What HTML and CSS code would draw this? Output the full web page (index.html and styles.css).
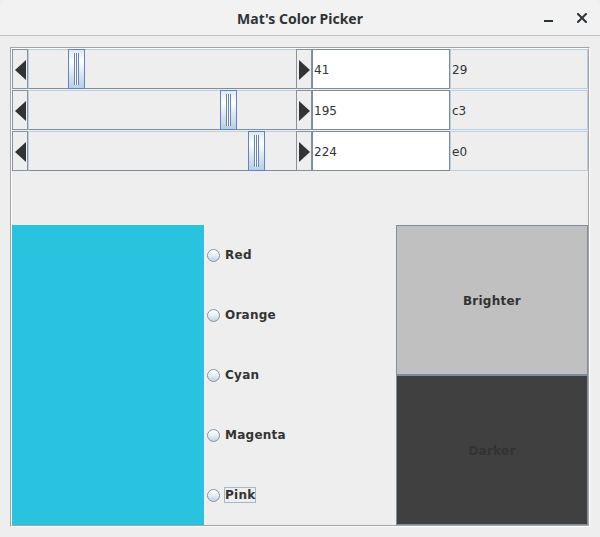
FILE: index.html
```html
<!DOCTYPE html>
<html>
<head>
<meta charset="utf-8">
<title>Mat's Color Picker</title>
<link rel="stylesheet" href="styles.css">
</head>
<body>
<div class="window">
  <div class="titlebar">
    <span class="spacer"></span>
    <span class="title">Mat's Color Picker</span>
    <div class="controls">
      <span class="min"></span>
      <svg class="close" width="10" height="10" viewBox="0 0 10 10"><path d="M1 1 L9 9 M9 1 L1 9" stroke="#2e3436" stroke-width="2" stroke-linecap="square"/></svg>
    </div>
  </div>
  <div class="content">
    <div class="etch-outer">
      <div class="etch-inner">
        <div class="rows">
          <div class="row">
            <div class="scrollbar">
              <div class="arrow"><svg width="11" height="20" viewBox="0 0 11 20"><path d="M0 10 L11 0 L11 20 Z" fill="#333"/></svg></div>
              <div class="track"><div class="thumb" style="left:39px"></div></div>
              <div class="arrow"><svg width="11" height="20" viewBox="0 0 11 20"><path d="M11 10 L0 0 L0 20 Z" fill="#333"/></svg></div>
            </div>
            <div class="field">41</div>
            <div class="hex">29</div>
          </div>
          <div class="row">
            <div class="scrollbar">
              <div class="arrow"><svg width="11" height="20" viewBox="0 0 11 20"><path d="M0 10 L11 0 L11 20 Z" fill="#333"/></svg></div>
              <div class="track"><div class="thumb" style="left:191px"></div></div>
              <div class="arrow"><svg width="11" height="20" viewBox="0 0 11 20"><path d="M11 10 L0 0 L0 20 Z" fill="#333"/></svg></div>
            </div>
            <div class="field">195</div>
            <div class="hex">c3</div>
          </div>
          <div class="row">
            <div class="scrollbar">
              <div class="arrow"><svg width="11" height="20" viewBox="0 0 11 20"><path d="M0 10 L11 0 L11 20 Z" fill="#333"/></svg></div>
              <div class="track"><div class="thumb" style="left:219px"></div></div>
              <div class="arrow"><svg width="11" height="20" viewBox="0 0 11 20"><path d="M11 10 L0 0 L0 20 Z" fill="#333"/></svg></div>
            </div>
            <div class="field">224</div>
            <div class="hex">e0</div>
          </div>
        </div>
        <div class="bottom">
          <div class="swatch"></div>
          <div class="radios">
            <div class="radio"><span class="circle"></span><span class="label">Red</span></div>
            <div class="radio"><span class="circle"></span><span class="label">Orange</span></div>
            <div class="radio"><span class="circle"></span><span class="label">Cyan</span></div>
            <div class="radio"><span class="circle"></span><span class="label">Magenta</span></div>
            <div class="radio"><span class="circle"></span><span class="label focused">Pink</span></div>
          </div>
          <div class="buttons">
            <div class="btn brighter">Brighter</div>
            <div class="btn darker">Darker</div>
          </div>
        </div>
      </div>
    </div>
  </div>
</div>
</body>
</html>
```

FILE: styles.css
```css
html, body {
  margin: 0;
  padding: 0;
  background: #eeeeee;
}
.window {
  width: 600px;
  height: 537px;
  background: #eeeeee;
  border-radius: 8px 8px 0 0;
  overflow: hidden;
  font-family: "DejaVu Sans", sans-serif;
}
.titlebar {
  height: 35px;
  border-bottom: 1px solid #c4c4c4;
  background: #f2f2f2;
  display: grid;
  grid-template-columns: 1fr auto 1fr;
  align-items: center;
}
.title {
  font-family: "Noto Sans", "DejaVu Sans", sans-serif;
  font-weight: 700;
  font-size: 14px;
  color: #2e3436;
  padding-top: 1px;
}
.controls {
  justify-self: end;
  display: flex;
  align-items: center;
  padding-right: 13px;
  gap: 24px;
}
.min {
  display: block;
  width: 9px;
  height: 2px;
  background: #2e3436;
  margin-top: 7px;
}
.close {
  display: block;
}
.content {
  padding: 11px 0 0 10px;
}
.etch-outer {
  width: 578px;
  border-top: 1px solid #a3a3a3;
  border-left: 1px solid #a3a3a3;
  border-right: 1px solid #ffffff;
  border-bottom: 1px solid #ffffff;
}
.etch-inner {
  width: 576px;
  border-top: 1px solid #ffffff;
  border-left: 1px solid #ffffff;
  border-right: 1px solid #a3a3a3;
  border-bottom: 1px solid #a3a3a3;
}
.rows {
  display: flex;
  flex-direction: column;
  gap: 1px;
}
.row {
  height: 40px;
  display: grid;
  grid-template-columns: 300px 138px 138px;
}
.scrollbar {
  display: flex;
}
.arrow {
  width: 14px;
  border: 1px solid #8593a1;
  background: #eeeeee;
  display: flex;
  align-items: center;
  justify-content: center;
}
.arrow svg {
  display: block;
  margin-top: 2px;
}
.track {
  flex: 1;
  position: relative;
  background: #eeeeee;
  border-top: 1px solid #b8cfe5;
  border-left: 1px solid #b8cfe5;
  border-bottom: 1px solid #7f8d9b;
}
.thumb {
  position: absolute;
  top: -1px;
  bottom: -1px;
  width: 15px;
  border: 1px solid #6382bf;
  background: linear-gradient(to bottom, #dde8f3 0%, #ffffff 30%, #dde8f3 60%, #b8cfe5 100%);
}
.thumb::after {
  content: "";
  position: absolute;
  left: 5px;
  top: 3px;
  bottom: 3px;
  width: 5px;
  background: linear-gradient(to right, #6382bf 0 1px, #ffffff 1px 2px, #6382bf 2px 3px, #ffffff 3px 4px, #6382bf 4px 5px);
}
.field {
  border: 1px solid #7f8d9b;
  background: #ffffff;
  padding: 2px 0 0 1px;
  display: flex;
  align-items: center;
  font-size: 12px;
  color: #333333;
}
.hex {
  border: 1px solid #b8cfe5;
  padding: 2px 0 0 1px;
  display: flex;
  align-items: center;
  font-size: 12px;
  color: #333333;
}
.bottom {
  margin-top: 54px;
  height: 300px;
  display: grid;
  grid-template-columns: 192px 192px 192px;
}
.swatch {
  background: #29c3e0;
}
.radios {
  display: flex;
  flex-direction: column;
}
.radio {
  height: 60px;
  display: flex;
  align-items: center;
  padding-left: 3px;
}
.circle {
  width: 11px;
  height: 11px;
  border: 1px solid #8593a1;
  border-radius: 50%;
  background: linear-gradient(to bottom, #ffffff 0%, #eef3f8 40%, #c3d2e1 100%);
  margin-right: 4px;
}
.label {
  font-size: 12px;
  font-weight: 700;
  letter-spacing: 0.25px;
  color: #333333;
  border: 1px solid transparent;
  line-height: 13px;
  padding: 1px 0 0 0;
}
.label.focused {
  border-color: #a3b8cc;
}
.buttons {
  display: flex;
  flex-direction: column;
}
.btn {
  height: 146px;
  padding-top: 2px;
  border: 1px solid #7f8d9b;
  display: flex;
  align-items: center;
  justify-content: center;
  font-size: 12px;
  font-weight: 700;
  letter-spacing: 0.25px;
  color: #333333;
}
.brighter {
  background: #c0c0c0;
}
.darker {
  background: #404040;
}
```
